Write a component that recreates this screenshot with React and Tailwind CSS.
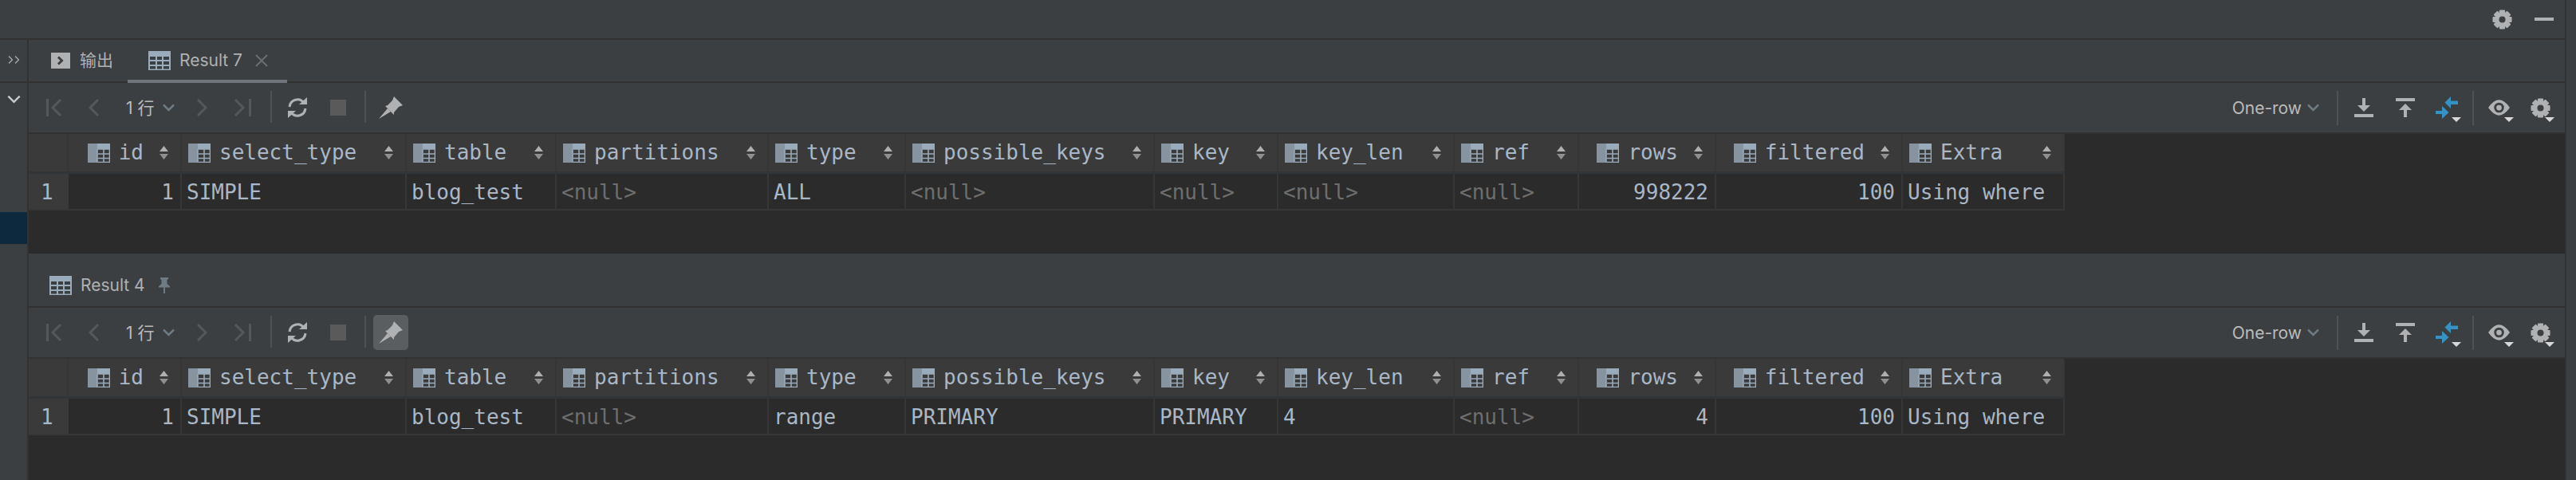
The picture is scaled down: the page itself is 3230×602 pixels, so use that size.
import React from "react";

const MONO = "font-['DejaVu_Sans_Mono','Liberation_Mono',monospace]";
const SANS = "font-['Inter','Noto_Sans_CJK_SC',sans-serif]";

function ColIcon() {
  return (
    <svg width="28" height="24" viewBox="0 0 28 24" className="shrink-0">
      <rect x="0" y="0" width="12" height="24" fill="#87939e" />
      <rect x="12" y="0" width="16" height="7" fill="#9aabbb" />
      <path d="M12 7 V24 M20 7 V24 M13 7 H28 M13 13 H28 M13 18.5 H28 M13 23.5 H28 M27.5 7 V24" fill="none" stroke="#9aabbb" strokeWidth="1.6" />
    </svg>
  );
}

function Sort() {
  return (
    <svg width="11" height="17" viewBox="0 0 11 17" className="shrink-0">
      <path d="M5.5 0 L11 7 H0 Z" fill="#afafaf" />
      <path d="M5.5 17 L11 10 H0 Z" fill="#8f8f8f" />
    </svg>
  );
}

function TableIcon() {
  return (
    <svg width="28" height="24" viewBox="0 0 28 24" className="shrink-0">
      <rect width="28" height="24" fill="#9aabbb" />
      <g fill="#3c3f41">
        <rect x="2" y="7" width="7" height="4" />
        <rect x="11" y="7" width="6" height="4" />
        <rect x="19" y="7" width="7" height="4" />
        <rect x="2" y="13" width="7" height="4" />
        <rect x="11" y="13" width="6" height="4" />
        <rect x="19" y="13" width="7" height="4" />
        <rect x="2" y="19" width="7" height="3.5" />
        <rect x="11" y="19" width="6" height="3.5" />
        <rect x="19" y="19" width="7" height="3.5" />
      </g>
    </svg>
  );
}

function Gear({ size = 25 }) {
  const teeth = [0, 45, 90, 135, 180, 225, 270, 315];
  return (
    <svg width={size} height={size} viewBox="0 0 28 28" className="shrink-0">
      <g fill="#afb1b3">
        {teeth.map((a) => (
          <rect key={a} x="10" y="0.5" width="8" height="6" rx="1.2" transform={`rotate(${a} 14 14)`} />
        ))}
        <circle cx="14" cy="14" r="10.5" />
      </g>
      <circle cx="14" cy="14" r="4.5" fill="#3c3f41" />
    </svg>
  );
}

function Caret({ className }) {
  return (
    <svg width="12" height="6" viewBox="0 0 12 6" className={`absolute ${className}`}>
      <path d="M0 0 H12 L6 6 Z" fill="#d8d8d8" />
    </svg>
  );
}

function Chev({ color = "#6e7a82", w = 15, h = 10, sw = 2.5 }) {
  return (
    <svg width={w} height={h} viewBox="0 0 15 10" className="shrink-0">
      <path d="M1 1.5 L7.5 8 L14 1.5" fill="none" stroke={color} strokeWidth={sw} />
    </svg>
  );
}

function Toolbar({ pinned }) {
  const dim = "#55585a";
  return (
    <div className="h-[62px] shrink-0 flex items-center bg-[#3c3f41] pr-[18px]">
      <svg width="20" height="22" viewBox="0 0 20 22" className="ml-[22px] shrink-0">
        <path d="M1.5 0 V22" stroke={dim} strokeWidth="3" />
        <path d="M18 1 L8 11 L18 21" fill="none" stroke={dim} strokeWidth="3" />
      </svg>
      <svg width="14" height="22" viewBox="0 0 14 22" className="ml-[33px] shrink-0">
        <path d="M12 1 L2 11 L12 21" fill="none" stroke={dim} strokeWidth="3" />
      </svg>
      <span className={`ml-[33px] w-[38px] shrink-0 text-[21px] leading-none text-[#bbbbbb] whitespace-nowrap ${SANS}`}>1 行</span>
      <span className="ml-[8px] flex"><Chev /></span>
      <svg width="14" height="22" viewBox="0 0 14 22" className="ml-[27px] shrink-0">
        <path d="M2 1 L12 11 L2 21" fill="none" stroke={dim} strokeWidth="3" />
      </svg>
      <svg width="22" height="22" viewBox="0 0 22 22" className="ml-[33px] shrink-0">
        <path d="M2 1 L12 11 L2 21" fill="none" stroke={dim} strokeWidth="3" />
        <path d="M20.5 0 V22" stroke={dim} strokeWidth="3" />
      </svg>
      <div className="ml-[24px] w-[2px] h-[40px] mb-[2px] bg-[#4f5153] shrink-0" />
      <svg width="26" height="26" viewBox="0 0 26 26" className="ml-[19px] shrink-0">
        <path d="M3 12 A10 10 0 0 1 21 7" fill="none" stroke="#afb1b3" strokeWidth="3" />
        <path d="M15 9 H25 V0 Z" fill="#afb1b3" />
        <path d="M23 14 A10 10 0 0 1 5 19" fill="none" stroke="#afb1b3" strokeWidth="3" />
        <path d="M11 17 H1 V26 Z" fill="#afb1b3" />
      </svg>
      <div className="ml-[28px] w-[20px] h-[20px] bg-[#5a5a5a] shrink-0" />
      <div className="ml-[23px] w-[2px] h-[40px] mb-[2px] bg-[#4f5153] shrink-0" />
      <div className={`ml-[9px] w-[44px] h-[44px] rounded-[5px] flex items-center justify-center shrink-0 ${pinned ? "bg-[#5a5e60]" : ""}`}>
        <svg width="30" height="28" viewBox="0 0 30 28">
          <path d="M19 0 L30 11 L25 13 L19 20 L19 23 L8 12 L11 11 L17 5 Z" fill="#afb1b3" />
          <path d="M11 15 L0 28 L15 19 Z" fill="#afb1b3" />
        </svg>
      </div>
      <div className="flex-1" />
      <span className={`text-[21px] leading-none text-[#bbbbbb] ${SANS}`}>One-row</span>
      <span className="ml-[7px] flex"><Chev /></span>
      <div className="ml-[22px] w-[2px] h-[43px] bg-[#4f5153] shrink-0" />
      <svg width="24" height="24" viewBox="0 0 24 24" className="ml-[20px] shrink-0">
        <path d="M12 0 V13" stroke="#afb1b3" strokeWidth="4" />
        <path d="M4 9 H20 L12 17 Z" fill="#afb1b3" />
        <rect x="0" y="20" width="24" height="4" fill="#afb1b3" />
      </svg>
      <svg width="24" height="24" viewBox="0 0 24 24" className="ml-[28px] shrink-0">
        <rect x="0" y="0" width="24" height="4" fill="#afb1b3" />
        <path d="M4 15 H20 L12 7 Z" fill="#afb1b3" />
        <path d="M12 12 V24" stroke="#afb1b3" strokeWidth="4" />
      </svg>
      <div className="relative ml-[26px] w-[28px] h-[28px] shrink-0">
        <svg width="28" height="28" viewBox="0 0 28 28">
          <path d="M11.5 7.5 L19 0 V5.5 H28 V10 H19 V15 Z" fill="#3592c4" />
          <path d="M16.5 20 L8 12 V18 H0 V22 H8 V28 Z" fill="#3592c4" />
        </svg>
        <Caret className="right-[-4px] bottom-[-4px]" />
      </div>
      <div className="ml-[18px] w-[2px] h-[43px] bg-[#4f5153] shrink-0" />
      <div className="relative ml-[18px] w-[27px] h-[20px] shrink-0">
        <svg width="27" height="20" viewBox="0 0 28 20" className="block">
          <path d="M0 10 Q14 -10 28 10 Q14 30 0 10 Z" fill="#afb1b3" />
          <circle cx="14" cy="10" r="6.5" fill="#3c3f41" />
          <circle cx="14" cy="10" r="3.5" fill="#afb1b3" />
        </svg>
        <Caret className="right-[-5px] bottom-[-8px]" />
      </div>
      <div className="relative ml-[26px] shrink-0 flex">
        <Gear size={25} />
        <Caret className="right-[-5px] bottom-[-5px]" />
      </div>
    </div>
  );
}

const cols = [
  { name: "id", w: 142, right: true },
  { name: "select_type", w: 282 },
  { name: "table", w: 188 },
  { name: "partitions", w: 266 },
  { name: "type", w: 172 },
  { name: "possible_keys", w: 312 },
  { name: "key", w: 155 },
  { name: "key_len", w: 221 },
  { name: "ref", w: 156 },
  { name: "rows", w: 172, right: true },
  { name: "filtered", w: 234, right: true },
  { name: "Extra", w: 203 },
];

function Grid({ row }) {
  return (
    <div className={`${MONO} flex-1 bg-[#2b2b2b]`}>
      <div className="h-[2px] bg-[#323232]" />
      <div className="h-[47px] flex w-fit">
        <div className="w-[50px] shrink-0 bg-[#3a3a3a] border-r-[2px] border-[#363636]" />
        {cols.map((c) => (
          <div
            key={c.name}
            style={{ width: c.w }}
            className={`shrink-0 bg-[#3a3a3a] border-r-[2px] border-[#363636] flex items-center pr-[15px] ${c.right ? "justify-end" : "pl-[8px]"}`}
          >
            <div className={`flex items-center gap-[11px] ${c.right ? "" : "flex-1"}`}>
              <ColIcon />
              <span className="text-[26px] leading-none pb-[2px] text-[#a9b7c6] whitespace-pre">{c.name}</span>
            </div>
            <div className={`flex ${c.right ? "ml-[20px]" : ""}`}><Sort /></div>
          </div>
        ))}
      </div>
      <div className="h-[3px] bg-[#323538] w-[2553px]" />
      <div className="h-[44px] flex w-fit">
        <div className="w-[50px] shrink-0 bg-[#3a3a3a] flex items-center pl-[15px] pt-[2px] text-[26px] leading-none text-[#a9b7c6]">1</div>
        {cols.map((c, i) => {
          const v = row[i];
          return (
            <div
              key={c.name}
              style={{ width: c.w }}
              className={`h-full shrink-0 border-r-[2px] border-[#363636] flex items-center pt-[2px] ${c.right ? "justify-end pr-[8px]" : "pl-[6px]"}`}
            >
              <span className={`text-[26px] leading-none whitespace-pre ${v === "<null>" ? "text-[#6e6e6e]" : "text-[#a9b7c6]"}`}>{v}</span>
            </div>
          );
        })}
      </div>
      <div className="h-[2px] bg-[#363636] w-[2553px]" />
    </div>
  );
}

function Panel({ tabs, pinned, row, cls }) {
  return (
    <div className={`flex flex-col ${cls}`}>
      {tabs}
      <div className="h-[2px] shrink-0 bg-[#323232]" />
      <Toolbar pinned={pinned} />
      <Grid row={row} />
    </div>
  );
}

export default function App() {
  const row1 = ["1", "SIMPLE", "blog_test", "<null>", "ALL", "<null>", "<null>", "<null>", "<null>", "998222", "100", "Using where"];
  const row2 = ["1", "SIMPLE", "blog_test", "<null>", "range", "PRIMARY", "PRIMARY", "4", "<null>", "4", "100", "Using where"];
  return (
    <div className="w-[3230px] h-[602px] bg-[#3c3f41] flex overflow-hidden">
      <div className="w-[3216px] shrink-0 flex flex-col">
        <div className="h-[48px] shrink-0 flex items-center justify-end pr-[14px]">
          <Gear size={25} />
          <div className="ml-[28px] w-[24px] h-[4px] bg-[#afb1b3]" />
        </div>
        <div className="h-[2px] shrink-0 bg-[#323232]" />
        <div className="flex-1 flex min-h-0">
          <div className="w-[34px] shrink-0 flex flex-col">
            <div className="h-[52px] flex items-start justify-center pt-[20px] shrink-0">
              <svg width="15" height="10" viewBox="0 0 15 10">
                <path d="M1 0.5 L5.5 5 L1 9.5 M9 0.5 L13.5 5 L9 9.5" fill="none" stroke="#afb1b3" strokeWidth="1.2" />
              </svg>
            </div>
            <div className="h-[2px] bg-[#323232] shrink-0" />
            <div className="h-[162px] shrink-0 flex justify-center pt-[15px] pl-[7px]">
              <span className="flex h-[12px] mr-[6px]"><Chev color="#c8c8c8" w={17} h={11} sw={2.2} /></span>
            </div>
            <div className="h-[40px] bg-[#0d293e] shrink-0" />
          </div>
          <div className="w-[2px] shrink-0 bg-[#323232]" />
          <div className="flex-1 min-w-0 flex flex-col">
            <Panel
              cls="h-[268px] shrink-0"
              row={row1}
              pinned={false}
              tabs={
                <div className={`h-[52px] shrink-0 flex text-[21px] text-[#afb1b3] ${SANS}`}>
                  <div className="flex items-center ml-[28px] w-[96px]">
                    <div className="w-[24px] h-[20px] bg-[#afb1b3] flex items-center justify-center">
                      <svg width="10" height="12" viewBox="0 0 10 12"><path d="M2 1.5 L6.5 6 L2 10.5" fill="none" stroke="#3c3f41" strokeWidth="3" /></svg>
                    </div>
                    <span className="ml-[12px] whitespace-nowrap">输出</span>
                  </div>
                  <div className="relative flex items-center w-[200px] pl-[26px]">
                    <TableIcon />
                    <span className="ml-[11px] whitespace-nowrap">Result 7</span>
                    <svg width="16" height="16" viewBox="0 0 16 16" className="ml-[16px]">
                      <path d="M1 1 L15 15 M15 1 L1 15" stroke="#6e7072" strokeWidth="1.8" />
                    </svg>
                    <div className="absolute left-0 right-0 bottom-[-2px] h-[4px] bg-[#6f737a]" />
                  </div>
                </div>
              }
            />
            <Panel
              cls="flex-1 min-h-0"
              row={row2}
              pinned={true}
              tabs={
                <div className={`h-[66px] shrink-0 flex items-center pl-[26px] pt-[14px] text-[21px] text-[#afb1b3] ${SANS}`}>
                  <TableIcon />
                  <span className="ml-[11px] whitespace-nowrap">Result 4</span>
                  <svg width="14" height="20" viewBox="0 0 14 20" className="ml-[17px]">
                    <path d="M2 0 H12 V2 L10.5 3 V8 L14 11 V12.5 H8 V20 H6 V12.5 H0 V11 L3.5 8 V3 L2 2 Z" fill="#6f7a82" />
                  </svg>
                </div>
              }
            />
          </div>
        </div>
      </div>
      <div className="flex-1 border-l-[2px] border-[#323232]" />
    </div>
  );
}
